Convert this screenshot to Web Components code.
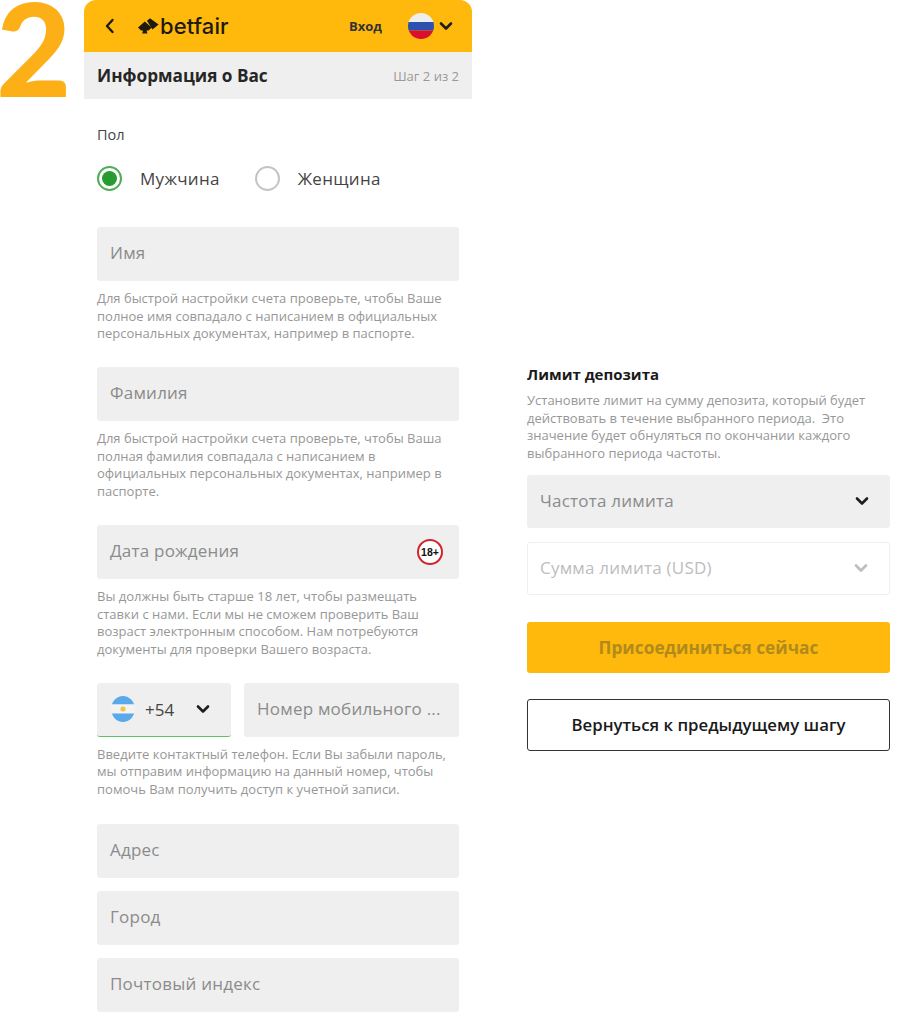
<!DOCTYPE html>
<html lang="ru">
<head>
<meta charset="utf-8">
<title>Betfair</title>
<style>
  html, body { margin: 0; background: #fff; }
  body { font-family: "Open Sans", "Liberation Sans", sans-serif; }
</style>
</head>
<body>
<signup-page>
  <signup-header slot="phone"></signup-header>
  <form-panel slot="phone">
    <radio-group></radio-group>
    <form-field label="Имя" hint="Для быстрой настройки счета проверьте, чтобы Ваше полное имя совпадало с написанием в официальных персональных документах, например в паспорте." gap="36"></form-field>
    <form-field label="Фамилия" hint="Для быстрой настройки счета проверьте, чтобы Ваша полная фамилия совпадала с написанием в официальных персональных документах, например в паспорте." gap="24.5"></form-field>
    <form-field label="Дата рождения" badge hint="Вы должны быть старше 18 лет, чтобы размещать ставки с нами. Если мы не сможем проверить Ваш возраст электронным способом. Нам потребуются документы для проверки Вашего возраста." gap="25"></form-field>
    <phone-field></phone-field>
    <form-field label="Адрес" gap="25.5"></form-field>
    <form-field label="Город" gap="13"></form-field>
    <form-field label="Почтовый индекс" gap="13"></form-field>
  </form-panel>
  <deposit-panel slot="side"></deposit-panel>
</signup-page>

<script>
const chevron = (color, w = 2.6) => `<svg width="14" height="10" viewBox="0 0 14 10"><path d="M2 2.5 7 7.5 12 2.5" fill="none" stroke="${color}" stroke-width="${w}" stroke-linecap="round" stroke-linejoin="round"/></svg>`;

class SignupPage extends HTMLElement {
  constructor() {
    super();
    this.attachShadow({ mode: 'open' });
    this.shadowRoot.innerHTML = `
      <style>
        :host { display: grid; grid-template-columns: 84px 388px 418px; width: 903px; }
        .num {
          font: 900 130px/94px Lato, Inter, sans-serif;
          color: #fdaf17;
          height: 97px;
          margin-left: -4px;
        }
        .side { margin-left: 55px; padding-top: 364px; }
      </style>
      <div class="num">2</div>
      <div><slot name="phone"></slot></div>
      <div class="side"><slot name="side"></slot></div>
    `;
  }
}

class SignupHeader extends HTMLElement {
  constructor() {
    super();
    this.attachShadow({ mode: 'open' });
    this.shadowRoot.innerHTML = `
      <style>
        :host { display: block; }
        .top {
          height: 52px; background: #ffb80c; border-radius: 12px 12px 0 0;
          display: flex; align-items: center; padding: 0 19px 0 21px; color: #1e1e1e;
        }
        .logo { display: flex; align-items: center; margin-left: 23px; }
        .logo b { font: 500 22px/1 Inter, sans-serif; letter-spacing: .1px; color: #1e1a10; margin-left: 1px; }
        .login { margin-left: auto; font-size: 13px; font-weight: 700; color: #333; }
        .flag { margin-left: 26px; margin-right: 5px; display: block; }
        .sub {
          height: 47px; background: #efefef; display: flex; align-items: center;
          justify-content: space-between; padding: 0 13px;
        }
        .sub strong { font-size: 17.2px; font-weight: 700; color: #262626; }
        .sub span { font-size: 13px; color: #999; }
      </style>
      <div class="top">
        <svg width="10" height="16" viewBox="0 0 10 16"><path d="M7.5 2 2 8 7.5 14" fill="none" stroke="#1e1e1e" stroke-width="2.4" stroke-linecap="round" stroke-linejoin="round"/></svg>
        <div class="logo">
          <svg width="21" height="16" viewBox="0 0 21 16">
            <path d="M0 9.6 6.8 3.4 13.6 9.6 10.6 12.4 H8.6 L9.4 15.5 H4.2 L5 12.4 H3 Z" fill="#1e1a10"/>
            <path d="M9 2.8 12 0.2 20.6 6.4 14.4 11.4 Z" fill="#1e1a10"/>
          </svg>
          <b>betfair</b>
        </div>
        <span class="login">Вход</span>
        <svg class="flag" width="26" height="26" viewBox="0 0 26 26">
          <clipPath id="c"><circle cx="13" cy="13" r="13"/></clipPath>
          <g clip-path="url(#c)">
            <rect width="26" height="9" fill="#eeeeee"/>
            <rect y="9" width="26" height="8.5" fill="#2b50b0"/>
            <rect y="17.5" width="26" height="8.5" fill="#d8102c"/>
          </g>
        </svg>
        ${chevron('#1e1e1e')}
      </div>
      <div class="sub"><strong>Информация о Вас</strong><span>Шаг 2 из 2</span></div>
    `;
  }
}

class FormPanel extends HTMLElement {
  constructor() {
    super();
    this.attachShadow({ mode: 'open' });
    this.shadowRoot.innerHTML = `
      <style>:host { display: block; padding: 0 13px; }</style>
      <slot></slot>
    `;
  }
}

class RadioGroup extends HTMLElement {
  constructor() {
    super();
    this.attachShadow({ mode: 'open' });
    this.shadowRoot.innerHTML = `
      <style>
        :host { display: block; padding-top: 26px; }
        .label { font-size: 14.5px; line-height: 20px; color: #444; }
        .row { display: flex; align-items: center; margin-top: 20px; height: 26px; font-size: 17px; letter-spacing: .3px; color: #444; }
        .dot { width: 25px; height: 25px; box-sizing: border-box; border-radius: 50%; border: 2px solid #c4c4c4; flex: none; }
        .dot.on { border-color: #4fae55; display: grid; place-items: center; }
        .dot.on::after { content: ""; width: 15px; height: 15px; border-radius: 50%; background: #279b30; }
        .t1 { margin: 0 35px 0 18px; }
        .t2 { margin-left: 18px; }
      </style>
      <div class="label">Пол</div>
      <div class="row">
        <span class="dot on"></span><span class="t1">Мужчина</span>
        <span class="dot"></span><span class="t2">Женщина</span>
      </div>
    `;
  }
}

class FormField extends HTMLElement {
  constructor() {
    super();
    this.attachShadow({ mode: 'open' });
  }
  connectedCallback() {
    const hint = this.getAttribute('hint');
    this.shadowRoot.innerHTML = `
      <style>
        :host { display: block; padding-top: ${this.getAttribute('gap') || 0}px; }
        .box {
          height: 54px; box-sizing: border-box; background: #efefef; border-radius: 3px;
          display: flex; align-items: center; justify-content: space-between;
          padding: 0 16px 3px 13px; font-size: 17px; letter-spacing: .22px; color: #8b8b8b;
        }
        .badge {
          width: 26px; height: 26px; box-sizing: border-box; border: 2px solid #d2232f; border-radius: 50%;
          background: #fff; display: grid; place-items: center; letter-spacing: 0; margin-top: 3px;
          font: 700 10.5px/1 "Liberation Sans", sans-serif; color: #111;
        }
        p { margin: 9px 0 0; font-size: 13px; line-height: 17.5px; color: #979797; }
      </style>
      <div class="box"><span>${this.getAttribute('label')}</span>${this.hasAttribute('badge') ? '<span class="badge">18+</span>' : ''}</div>
      ${hint ? `<p>${hint}</p>` : ''}
    `;
  }
}

class PhoneField extends HTMLElement {
  constructor() {
    super();
    this.attachShadow({ mode: 'open' });
    this.shadowRoot.innerHTML = `
      <style>
        :host { display: block; padding-top: 24.5px; }
        .row { display: flex; gap: 13px; height: 54px; }
        .code {
          width: 134px; box-sizing: border-box; background: #efefef; border-radius: 3px;
          border-bottom: 1.5px solid #62c266; display: flex; align-items: center;
          padding: 0 21px 0 14px; font-size: 17px; color: #444;
        }
        .code span { margin-left: 10px; margin-right: auto; }
        .num {
          flex: 1; background: #efefef; border-radius: 3px; display: flex; align-items: center;
          padding: 0 13px 2px; font-size: 17px; color: #8b8b8b; white-space: nowrap; letter-spacing: .22px;
        }
        p { margin: 9px 0 0; font-size: 13px; line-height: 17.5px; color: #979797; }
      </style>
      <div class="row">
        <div class="code">
          <svg width="24" height="26" viewBox="0 0 24 26">
            <clipPath id="a"><ellipse cx="12" cy="13" rx="11.8" ry="13"/></clipPath>
            <g clip-path="url(#a)">
              <rect width="24" height="8.5" fill="#5aa9ea"/>
              <rect y="8.5" width="24" height="9" fill="#f3f3f3"/>
              <rect y="17.5" width="24" height="8.5" fill="#5aa9ea"/>
              <circle cx="12" cy="13" r="2.6" fill="#f5c542"/>
            </g>
          </svg>
          <span>+54</span>
          ${chevron('#1e1e1e')}
        </div>
        <div class="num">Номер мобильного ...</div>
      </div>
      <p>Введите контактный телефон. Если Вы забыли пароль, мы отправим информацию на данный номер, чтобы помочь Вам получить доступ к учетной записи.</p>
    `;
  }
}

class DepositPanel extends HTMLElement {
  constructor() {
    super();
    this.attachShadow({ mode: 'open' });
    this.shadowRoot.innerHTML = `
      <style>
        :host { display: block; }
        h3 { margin: 0; font-size: 15px; line-height: 20px; font-weight: 700; color: #1a1a1a; }
        p { margin: 8px 0 0; font-size: 13px; line-height: 17.5px; color: #979797; white-space: pre-wrap; }
        .select {
          box-sizing: border-box; border-radius: 3px; display: flex; align-items: center;
          justify-content: space-between; padding: 0 21px 2px 13px; font-size: 17px; letter-spacing: .22px;
        }
        .a { height: 53px; margin-top: 13px; background: #efefef; color: #8b8b8b; }
        .b { height: 53px; margin-top: 14px; padding-left: 12px; border: 1px solid #efefef; color: #bdbdbd; }
        .join {
          margin-top: 27px; height: 51px; border-radius: 3px; background: #ffb80c;
          display: grid; place-items: center; font-size: 17.3px; font-weight: 700; color: #b08a1c;
        }
        .back {
          margin-top: 26px; height: 51.5px; box-sizing: border-box; border-radius: 3px; border: 1px solid #333;
          display: grid; place-items: center; font-size: 16.8px; font-weight: 600; color: #1a1a1a;
        }
      </style>
      <h3>Лимит депозита</h3>
      <p>Установите лимит на сумму депозита, который будет действовать в течение выбранного периода.  Это значение будет обнуляться по окончании каждого выбранного периода частоты.</p>
      <div class="select a"><span>Частота лимита</span>${chevron('#1e1e1e')}</div>
      <div class="select b"><span>Сумма лимита (USD)</span>${chevron('#bdbdbd')}</div>
      <div class="join">Присоединиться сейчас</div>
      <div class="back">Вернуться к предыдущему шагу</div>
    `;
  }
}

customElements.define('signup-page', SignupPage);
customElements.define('signup-header', SignupHeader);
customElements.define('form-panel', FormPanel);
customElements.define('radio-group', RadioGroup);
customElements.define('form-field', FormField);
customElements.define('phone-field', PhoneField);
customElements.define('deposit-panel', DepositPanel);
</script>
</body>
</html>
